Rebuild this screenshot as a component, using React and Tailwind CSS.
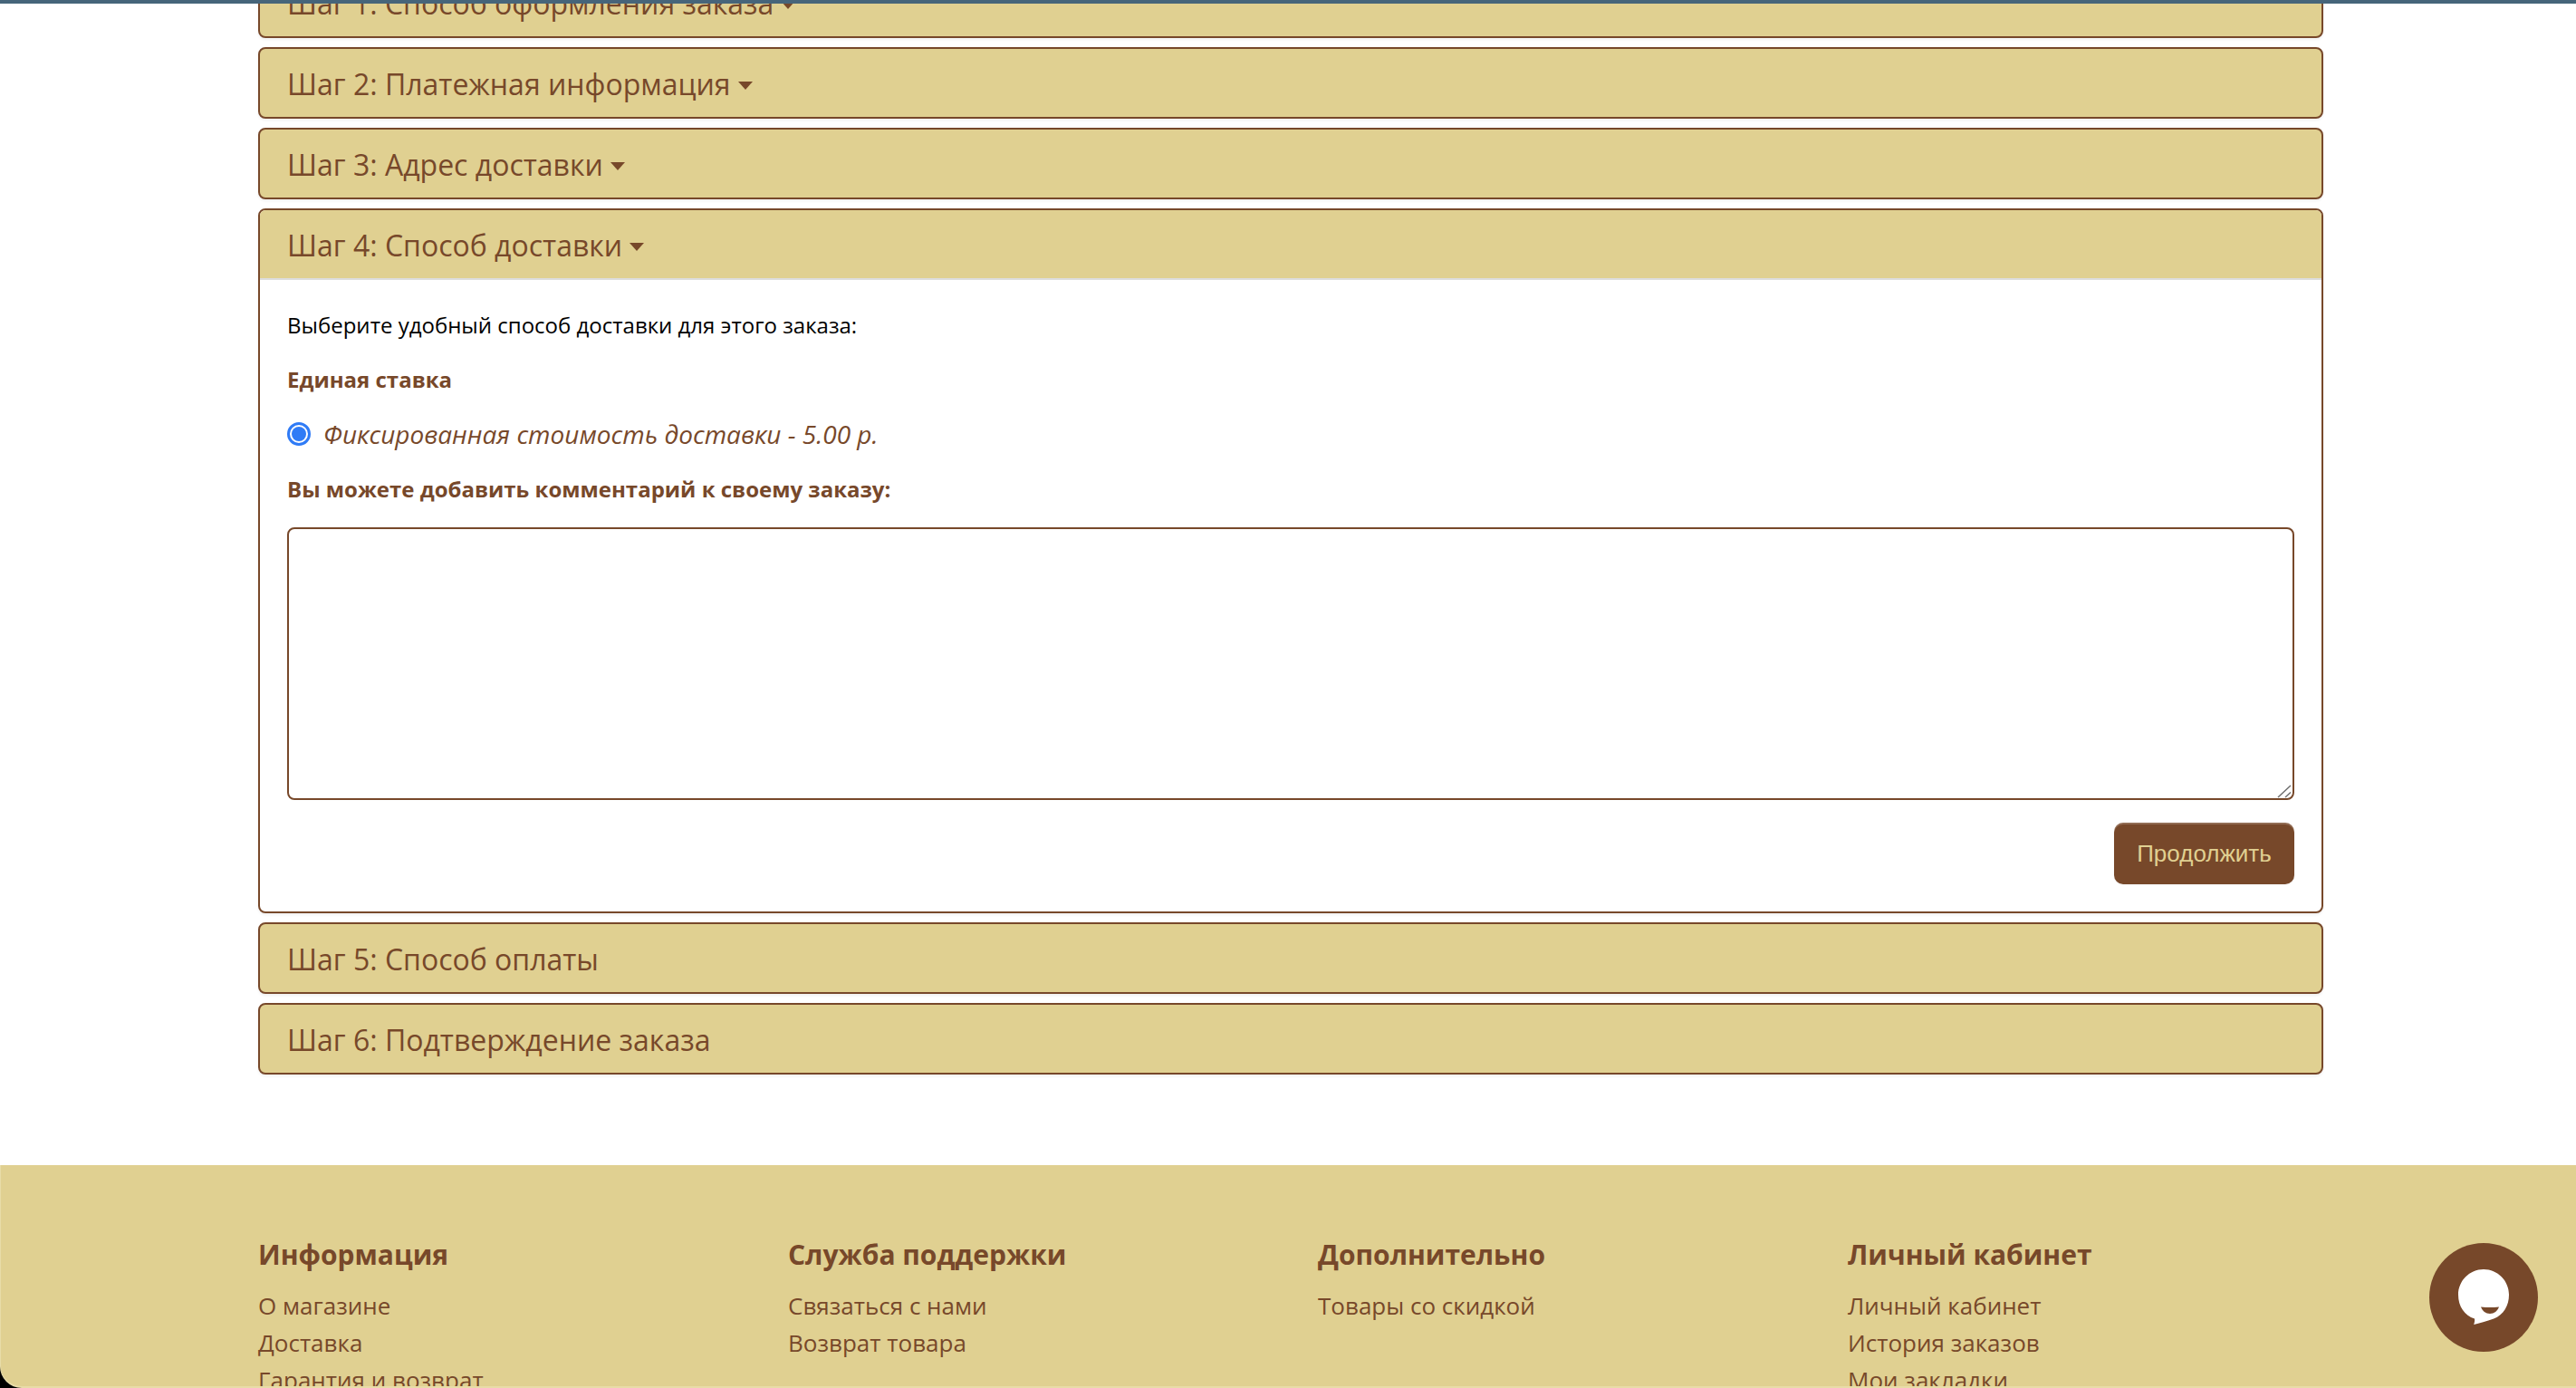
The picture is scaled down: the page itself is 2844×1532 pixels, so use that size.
import React from 'react'

const sans = "font-['Open_Sans','Noto_Sans',sans-serif]"

function Caret() {
  return <span className="mt-[3px] ml-[8px] inline-block h-0 w-0 border-x-8 border-t-[9px] border-x-transparent border-t-[#77482a] align-middle" />
}

function StepPanel({ title, caret }) {
  return (
    <div className="h-[79px] rounded-lg border-2 border-[#77482a] bg-[#e0d091] shadow-[0_2px_3px_rgba(0,0,0,0.06)]">
      <div className="flex h-full items-center px-[30px] pt-[2px] text-[32px] text-[#77482a]">
        {title}
        {caret && <Caret />}
      </div>
    </div>
  )
}

function FooterCol({ title, links }) {
  return (
    <div>
      <h5 className="mb-[14px] text-[30px] leading-[44px] font-bold">{title}</h5>
      <ul className="flex flex-col">
        {links.map((l) => (
          <li key={l} className="text-[26px] leading-[41px]">{l}</li>
        ))}
      </ul>
    </div>
  )
}

export default function App() {
  return (
    <div className={`relative h-[1532px] w-[2844px] overflow-hidden bg-white ${sans}`}>
      <div className="absolute top-0 left-0 z-10 h-1 w-full bg-[#46657a]" />

      <div className="ml-[285px] -mt-[37px] flex w-[2280px] flex-col gap-[10px]">
        <StepPanel title="Шаг 1: Способ оформления заказа" caret />
        <StepPanel title="Шаг 2: Платежная информация" caret />
        <StepPanel title="Шаг 3: Адрес доставки" caret />

        <div className="overflow-hidden rounded-lg border-2 border-[#77482a] bg-white shadow-[0_2px_3px_rgba(0,0,0,0.06)]">
          <div className="flex h-[77px] items-center border-b-2 border-[#dddddd] bg-[#e0d091] px-[30px] pt-[2px] text-[32px] text-[#77482a]">
            Шаг 4: Способ доставки
            <Caret />
          </div>
          <div className="px-[30px] pt-[30px] pb-[30px]">
            <p className="mb-[20px] text-[24px] leading-[40px] text-black">Выберите удобный способ доставки для этого заказа:</p>
            <p className="mb-[20px] text-[24px] leading-[40px] font-bold text-[#77482a]">Единая ставка</p>
            <label className="mb-[21px] flex h-[40px] items-center text-[28px] text-[#77482a] italic">
              <input type="radio" name="shipping" defaultChecked className="m-0 mr-[14px] h-[26px] w-[26px] appearance-none rounded-full border-[3px] border-[#2f7bf6] bg-[#2f7bf6] bg-clip-content p-[2px]" />
              Фиксированная стоимость доставки - 5.00 р.
            </label>
            <p className="mb-[22px] text-[24px] leading-[40px] font-bold text-[#77482a]">Вы можете добавить комментарий к своему заказу:</p>
            <div className="relative">
              <textarea className="block h-[301px] w-full resize-none rounded-lg border-2 border-[#77482a] bg-white" />
              {/* resize grip */}
              <svg className="absolute right-[3px] bottom-[2px]" width="16" height="16" viewBox="0 0 16 16">
                <path d="M1 15 15 2M9 15l6-5.500" stroke="#6f6f6f" strokeWidth="1.500" fill="none" />
              </svg>
            </div>
            <div className="mt-[25px] flex justify-end">
              <button className="h-[68px] w-[199px] rounded-[10px] bg-[#77482a] font-['Liberation_Sans',sans-serif] text-[26px] text-[#e0d091] shadow-[inset_0_2px_0_rgba(255,255,255,0.2),0_1px_2px_rgba(0,0,0,0.05)]">
                Продолжить
              </button>
            </div>
          </div>
        </div>

        <StepPanel title="Шаг 5: Способ оплаты" />
        <StepPanel title="Шаг 6: Подтверждение заказа" />
      </div>

      {/* window corner shows behind the footer */}
      <div className="absolute bottom-0 left-0 h-6 w-6 bg-black" />

      <footer className="relative mt-[100px] h-[246px] overflow-hidden rounded-bl-[24px] border-b-2 border-l border-[#e8dca8] bg-[#e0d091] pt-[77px] pl-[284px] text-[#77482a]">
        <div className="grid w-[2340px] grid-cols-4">
          <FooterCol title="Информация" links={['О магазине', 'Доставка', 'Гарантия и возврат']} />
          <FooterCol title="Служба поддержки" links={['Связаться с нами', 'Возврат товара']} />
          <FooterCol title="Дополнительно" links={['Товары со скидкой']} />
          <FooterCol title="Личный кабинет" links={['Личный кабинет', 'История заказов', 'Мои закладки']} />
        </div>
      </footer>

      <div className="absolute top-[1372px] left-[2682px] flex h-[120px] w-[120px] items-center justify-center rounded-full bg-[#77482a]">
        <svg width="56" height="62" viewBox="0 0 56 62">
          <path d="M28 0C12.500 0 0 12.600 0 28c0 13 7 23 18 26.500c.5 2-.2 4.500-.8 6.500 6-1.500 14-3.800 22-6.500C50 50.500 56 40 56 28 56 12.600 43.500 0 28 0z" fill="#fff" />
          <path d="M25 41.500c7 .8 13 .8 20 0-1.500 4.500-5.500 7.500-10 7.500s-8.500-3-10-7.500z" fill="#77482a" />
        </svg>
      </div>
    </div>
  )
}
